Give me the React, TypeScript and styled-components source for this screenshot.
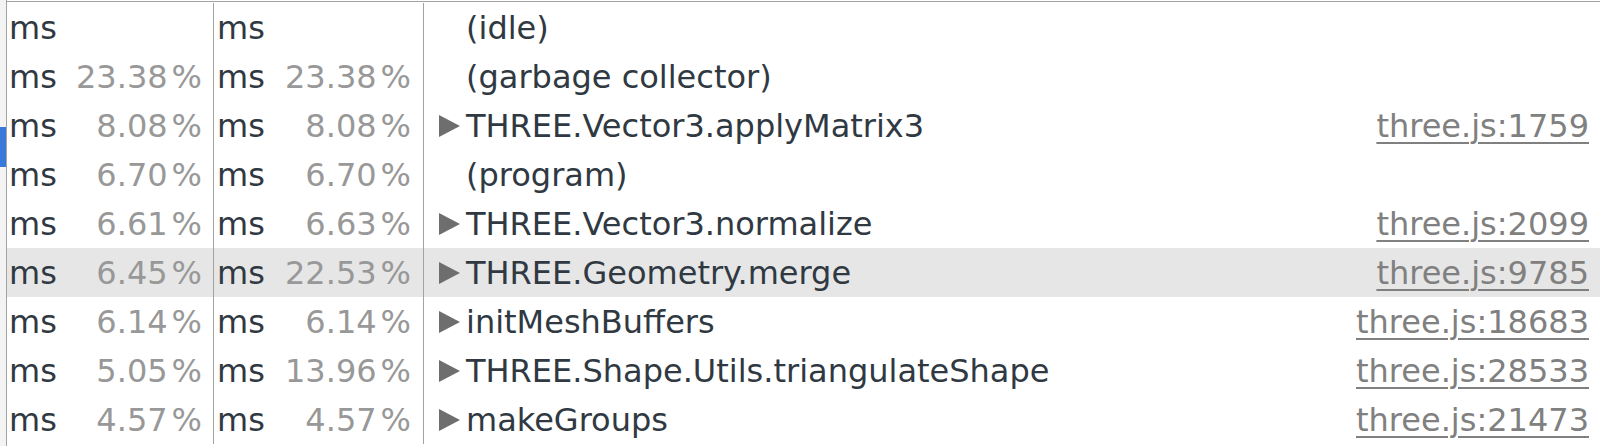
import React from "react";
import styled, { createGlobalStyle } from "styled-components";

const GlobalStyle = createGlobalStyle`
  html, body {
    margin: 0;
    padding: 0;
    background: #ffffff;
  }
  body {
    font-family: "DejaVu Sans", "Liberation Sans", sans-serif;
  }
`;

type Row = {
  self: string;
  total: string;
  name: string;
  url?: string;
  expandable?: boolean;
  selected?: boolean;
};

const rows: Row[] = [
  { self: "", total: "", name: "(idle)" },
  { self: "23.38", total: "23.38", name: "(garbage collector)" },
  { self: "8.08", total: "8.08", name: "THREE.Vector3.applyMatrix3", url: "three.js:1759", expandable: true },
  { self: "6.70", total: "6.70", name: "(program)" },
  { self: "6.61", total: "6.63", name: "THREE.Vector3.normalize", url: "three.js:2099", expandable: true },
  { self: "6.45", total: "22.53", name: "THREE.Geometry.merge", url: "three.js:9785", expandable: true, selected: true },
  { self: "6.14", total: "6.14", name: "initMeshBuffers", url: "three.js:18683", expandable: true },
  { self: "5.05", total: "13.96", name: "THREE.Shape.Utils.triangulateShape", url: "three.js:28533", expandable: true },
  { self: "4.57", total: "4.57", name: "makeGroups", url: "three.js:21473", expandable: true },
];

const Page = styled.div`
  display: flex;
  width: 1600px;
  height: 446px;
  overflow: hidden;
  background: #ffffff;
`;

const Gutter = styled.div`
  width: 6px;
  flex-shrink: 0;
  background: #f3f3f3;
  border-right: 1px solid #a3a3a3;
  display: flex;
  flex-direction: column;
`;

const GutterMark = styled.div<{ $active?: boolean }>`
  height: 40px;
  margin-top: 127px;
  background: ${({ $active }) => ($active ? "#3879d9" : "transparent")};
`;

const Grid = styled.div`
  flex: 1;
  display: flex;
  flex-direction: column;
  border-top: 1px solid #a3a3a3;
  padding-top: 1px;
  margin-top: 1px;
`;

const GridRow = styled.div<{ $selected?: boolean }>`
  display: grid;
  grid-template-columns: 207px 210px 1fr;
  height: 49px;
  align-items: stretch;
  background: ${({ $selected }) => ($selected ? "#e6e6e6" : "transparent")};
  color: #303942;
  font-size: 32px;
`;

const TimeCell = styled.div<{ $padLeft: number; $padRight: number }>`
  display: flex;
  align-items: center;
  justify-content: space-between;
  padding: 0 ${({ $padRight }) => $padRight}px 0 ${({ $padLeft }) => $padLeft}px;
  border-right: 1px solid #a3a3a3;
  white-space: nowrap;
`;

const Unit = styled.span`
  color: #303942;
`;

const Percent = styled.span`
  color: #989898;
`;

const PercentSign = styled.span`
  margin-left: 4px;
`;

const NameCell = styled.div`
  display: flex;
  align-items: center;
  padding: 0 11px 0 14px;
  white-space: nowrap;
`;

const Toggle = styled.span<{ $visible?: boolean }>`
  width: 28px;
  flex: none;
  display: flex;
  align-items: center;
  visibility: ${({ $visible }) => ($visible ? "visible" : "hidden")};

  svg {
    display: block;
    flex: none;
    width: 23px;
    height: 22px;
  }
`;

const Name = styled.span`
  flex: 1;
`;

const SourceLink = styled.a`
  color: #808080;
  text-decoration: underline;
  text-underline-offset: 5px;
  text-decoration-thickness: 2px;
`;

const Triangle = () => (
  <svg viewBox="0 0 23 22">
    <path d="M1 0 L22 11 L1 22 Z" fill="#6e6e6e" />
  </svg>
);

const Pct: React.FC<{ value: string }> = ({ value }) => (
  <Percent>
    {value}
    <PercentSign>%</PercentSign>
  </Percent>
);

const App: React.FC = () => (
  <Page>
    <GlobalStyle />
    <Gutter>
      <GutterMark $active />
    </Gutter>
    <Grid>
      {rows.map((r) => (
        <GridRow key={r.name} $selected={r.selected}>
          <TimeCell $padLeft={2} $padRight={11}>
            <Unit>ms</Unit>
            {r.self && <Pct value={r.self} />}
          </TimeCell>
          <TimeCell $padLeft={3} $padRight={12}>
            <Unit>ms</Unit>
            {r.total && <Pct value={r.total} />}
          </TimeCell>
          <NameCell>
            <Toggle $visible={r.expandable}>
              <Triangle />
            </Toggle>
            <Name>{r.name}</Name>
            {r.url && <SourceLink href="#">{r.url}</SourceLink>}
          </NameCell>
        </GridRow>
      ))}
    </Grid>
  </Page>
);

export default App;
